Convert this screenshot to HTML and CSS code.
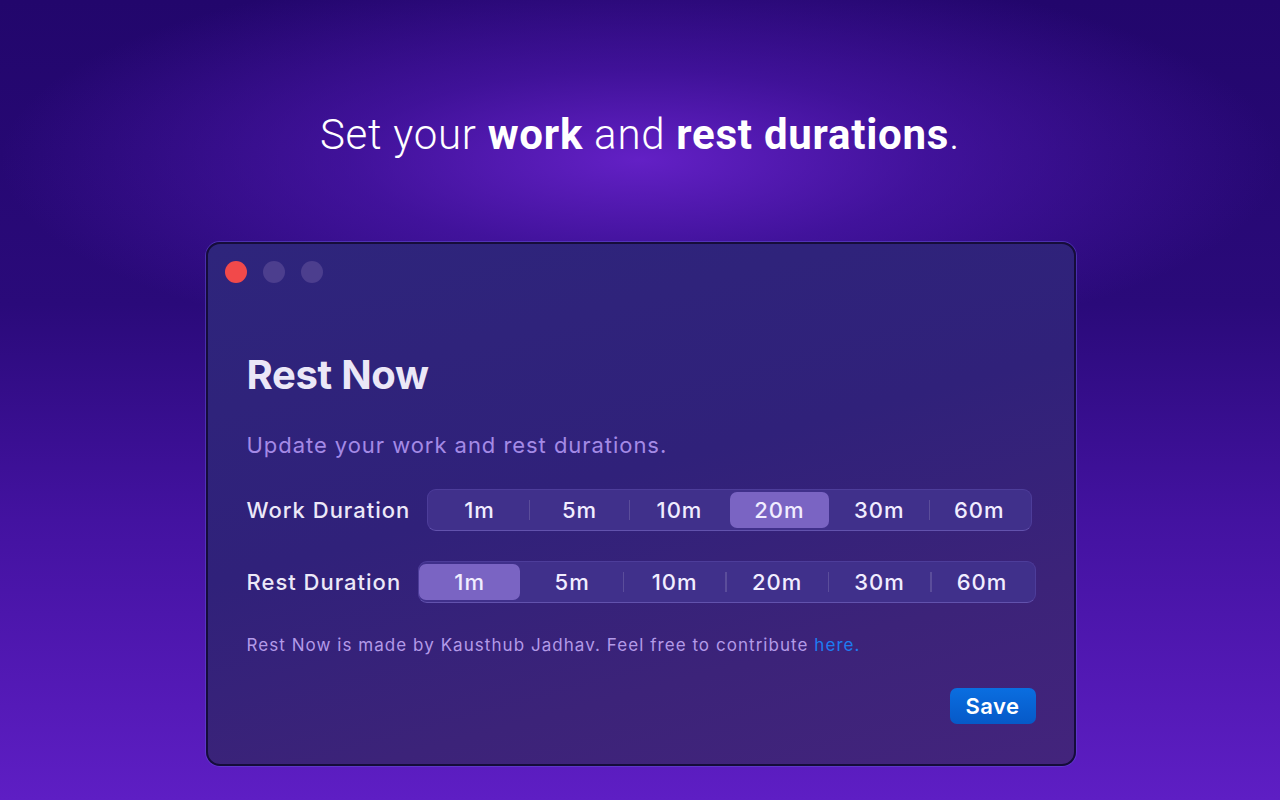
FILE: index.html
```html
<!DOCTYPE html>
<html lang="en">
<head>
<meta charset="utf-8">
<title>Rest Now</title>
<link rel="stylesheet" href="styles.css">
</head>
<body>
<main class="stage">
  <h1 class="headline">Set your <b>work</b> and <b>rest durations</b>.</h1>
  <section class="window">
    <div class="titlebar">
      <span class="dot dot-red"></span>
      <span class="dot"></span>
      <span class="dot"></span>
    </div>
    <div class="content">
      <h2 class="title">Rest Now</h2>
      <p class="subtitle">Update your work and rest durations.</p>
      <div class="row row-work">
        <span class="label">Work Duration</span>
        <div class="seg">
          <span class="opt">1m</span><span class="sep"></span>
          <span class="opt">5m</span><span class="sep"></span>
          <span class="opt">10m</span><span class="sep off"></span>
          <span class="opt on">20m</span><span class="sep off"></span>
          <span class="opt">30m</span><span class="sep"></span>
          <span class="opt">60m</span>
        </div>
      </div>
      <div class="row row-rest">
        <span class="label">Rest Duration</span>
        <div class="seg">
          <span class="opt on">1m</span><span class="sep off"></span>
          <span class="opt">5m</span><span class="sep"></span>
          <span class="opt">10m</span><span class="sep"></span>
          <span class="opt">20m</span><span class="sep"></span>
          <span class="opt">30m</span><span class="sep"></span>
          <span class="opt">60m</span>
        </div>
      </div>
      <p class="footer">Rest Now is made by Kausthub Jadhav. Feel free to contribute <a class="link" href="#">here.</a></p>
      <div class="actions">
        <button class="save" type="button">Save</button>
      </div>
    </div>
  </section>
</main>
</body>
</html>
```

FILE: styles.css
```css
* { box-sizing: border-box; }
html, body { margin: 0; padding: 0; }
body {
  width: 1280px;
  height: 800px;
  overflow: hidden;
  background:
    radial-gradient(ellipse 640px 200px at 50% 20%, rgba(104, 34, 204, 0.92) 0%, rgba(86, 26, 186, 0.55) 45%, rgba(60, 14, 150, 0) 100%),
    linear-gradient(to bottom, #22066c 0%, #2a0a7a 38%, #4312a0 65%, #5e1ec4 100%);
  font-family: Inter, "Noto Sans", sans-serif;
}
.stage {
  display: flex;
  flex-direction: column;
  align-items: center;
}
.headline {
  margin: 111px 0 0;
  font-family: Roboto, "Liberation Sans", sans-serif;
  font-weight: 300;
  font-size: 42px;
  line-height: 48px;
  color: #ffffff;
  letter-spacing: 0.75px;
}
.headline b { font-weight: 700; }

.window {
  margin-top: 83px;
  margin-left: 1px;
  width: 870px;
  height: 524px;
  border: 2px solid #150d3a;
  border-radius: 14px;
  box-shadow: 0 0 0 1px rgba(96, 78, 210, 0.55);
  background: linear-gradient(165deg, #2e257c 0%, #30217a 45%, #3c2379 75%, #43247c 100%);
  overflow: hidden;
}
.titlebar {
  display: flex;
  gap: 16px;
  padding: 17px 17px 0;
}
.dot {
  width: 22px;
  height: 22px;
  border-radius: 50%;
  background: #4c3e8e;
}
.dot-red { background: #f2494a; }

.content {
  padding: 0 38px 0 39px;
}
.title {
  margin: 68px 0 0;
  font-size: 40px;
  line-height: 48px;
  font-weight: 700;
  color: #ebe7f7;
  letter-spacing: -0.3px;
}
.subtitle {
  margin: 32px 0 0;
  font-size: 22px;
  line-height: 28px;
  font-weight: 400;
  color: #a48ae6;
  letter-spacing: 0.95px;
}
.row {
  display: flex;
  align-items: center;
  gap: 17px;
  margin-top: 30px;
}
.row-rest { gap: 17px; }
.row-work { margin-right: 4px; }
.label {
  font-size: 22px;
  font-weight: 500;
  color: #ece8f8;
  white-space: nowrap;
  letter-spacing: 1px;
}
.seg {
  flex: 1;
  display: flex;
  align-items: center;
  height: 42px;
  padding: 2px;
  border-radius: 9px;
  background: #40308b;
  border: 1px solid #4d3d9a;
  border-bottom-color: #6252ad;
}
.row-rest .seg { padding-left: 0; }
.opt {
  flex: 1;
  height: 100%;
  display: flex;
  align-items: center;
  justify-content: center;
  font-size: 22px;
  font-weight: 500;
  color: #f1edff;
  border-radius: 7px;
  letter-spacing: 1px;
}
.opt.on {
  background: #7a64c3;
}
.sep {
  width: 1.5px;
  height: 20px;
  background: rgba(255, 255, 255, 0.14);
}
.sep.off { background: transparent; }

.footer {
  margin: 31px 0 0;
  font-size: 17px;
  line-height: 22px;
  color: #b39ae8;
  letter-spacing: 1.05px;
}
.link {
  color: #1d7cf2;
  text-decoration: none;
}
.actions {
  display: flex;
  justify-content: flex-end;
  margin-top: 32px;
}
.save {
  width: 86px;
  height: 36px;
  border: none;
  border-radius: 7px;
  background: linear-gradient(to bottom, #0a6ee0, #0659c8);
  color: #ffffff;
  font-family: Inter, "Noto Sans", sans-serif;
  font-size: 22px;
  font-weight: 600;
  padding: 0;
  letter-spacing: 0.5px;
}
```
